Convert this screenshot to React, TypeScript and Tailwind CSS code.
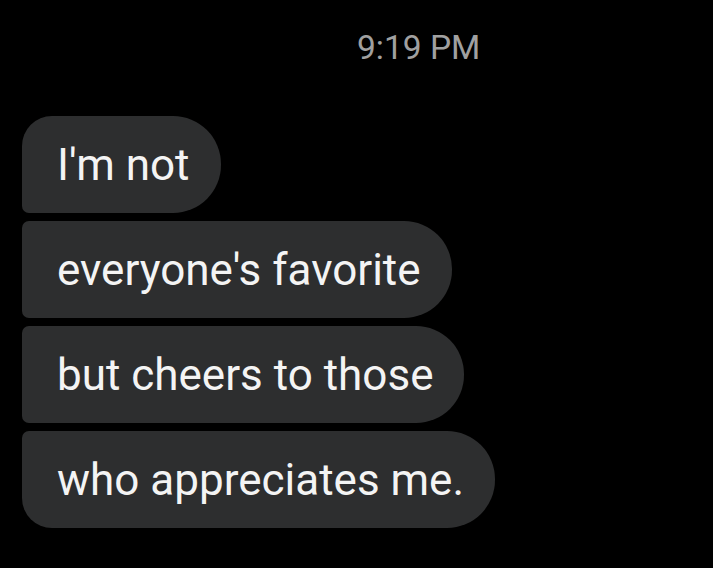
import React from "react";

const lines = [
  "I'm not",
  "everyone's favorite",
  "but cheers to those",
  "who appreciates me.",
];

export default function App() {
  return (
    <div className="w-[713px] h-[568px] bg-black overflow-hidden" style={{ fontFamily: "Roboto, 'Liberation Sans', sans-serif" }}>
      <div className="pt-[33px] pl-[357px] text-[33.5px] leading-[30px] text-[#a0a0a0]">9:19 PM</div>
      <div className="mt-[53px] pl-[22px] flex flex-col items-start gap-[8px]">
        {lines.map((t, i) => {
          const first = i === 0;
          const last = i === lines.length - 1;
          const cls = first
            ? "rounded-tl-[30px] rounded-bl-[7px]"
            : last
            ? "rounded-tl-[7px] rounded-bl-[30px]"
            : "rounded-tl-[7px] rounded-bl-[7px]";
          return (
            <div
              key={i}
              className={`h-[97px] flex items-center pl-[35px] pr-[31px] bg-[#2d2e2f] text-[#f4f4f4] text-[44px] rounded-r-[48px] ${cls}`}
            >
              {t}
            </div>
          );
        })}
      </div>
    </div>
  );
}
